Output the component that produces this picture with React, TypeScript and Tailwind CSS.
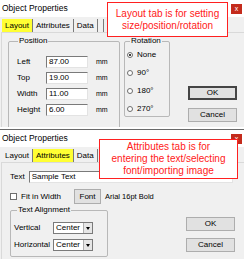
import { ReactNode } from 'react';

const ui = { fontFamily: '"Liberation Sans", Arial, sans-serif' };

function Tabs({ active }: { active: string }) {
  const tabs = ['Layout', 'Attributes', 'Data'];
  return (
    <div className="flex items-end h-[15px] pl-[2px] text-[8px] text-black">
      {tabs.map((t) => (
        <div
          key={t}
          className={`h-[13px] px-[3px] flex items-center border-r border-[#7a7a7a] ${
            t === active ? 'bg-[#ffff33]' : ''
          }`}
        >
          {t}
        </div>
      ))}
      <div className="w-[6px] h-[13px] border-r border-[#7a7a7a]" />
    </div>
  );
}

function TitleBar() {
  return (
    <div className="h-[17px] bg-white flex items-center justify-between pl-[2px] pr-[2px]">
      <span className="text-[8.5px] text-black">Object Properties</span>
      <div className="w-[11px] h-[10px] bg-[#c42b1c] text-white text-[7px] leading-[10px] text-center">
        x
      </div>
    </div>
  );
}

function Group({ label, className, children }: { label: string; className: string; children: ReactNode }) {
  return (
    <fieldset className={`border border-[#b8b8b8] rounded-[2px] px-[3px] ${className}`}>
      <legend className="px-[1px] ml-[3px] text-[8px] leading-[8px]">{label}</legend>
      {children}
    </fieldset>
  );
}

function Btn({ label, isDefault }: { label: string; isDefault?: boolean }) {
  return (
    <div
      className={`w-[49px] h-[14px] bg-[#e1e1e1] flex items-center justify-center text-[8px] ${
        isDefault ? 'border-2 border-[#454545]' : 'border border-[#adadad]'
      }`}
    >
      {label}
    </div>
  );
}

function Field({ value, w }: { value: string; w: string }) {
  return (
    <div className={`${w} h-[12px] bg-white border border-[#7a7a7a] border-b-[#e3e3e3] border-r-[#e3e3e3] pl-[2px] text-[8px] leading-[10px]`}>
      {value}
    </div>
  );
}

function Radio({ checked }: { checked?: boolean }) {
  return (
    <div className="w-[6px] h-[6px] rounded-full border border-[#6d6d6d] bg-white flex items-center justify-center">
      {checked && <div className="w-[2px] h-[2px] rounded-full bg-black" />}
    </div>
  );
}

function Combo({ value }: { value: string }) {
  return (
    <div className="w-[40px] h-[12px] bg-white border border-[#7a7a7a] flex items-center justify-between pl-[2px] text-[8px]">
      <span>{value}</span>
      <div className="w-[9px] h-[10px] bg-[#e6e6e6] border-l border-[#b0b0b0] flex items-center justify-center">
        <div className="w-0 h-0 border-l-[2.5px] border-r-[2.5px] border-t-[3px] border-l-transparent border-r-transparent border-t-black" />
      </div>
    </div>
  );
}

function Note({ lines, className }: { lines: string[]; className: string }) {
  return (
    <div
      className={`absolute bg-white border-[1.5px] border-[#ff2020] flex flex-col items-center justify-center text-[10px] leading-[12px] text-[#ff2020] ${className}`}
    >
      {lines.map((l) => (
        <span key={l}>{l}</span>
      ))}
    </div>
  );
}

function LayoutDialog() {
  const rows = [
    ['Left', '87.00'],
    ['Top', '19.00'],
    ['Width', '11.00'],
    ['Height', '6.00'],
  ];
  return (
    <div className="relative h-[127px] bg-[#f0f0f0] overflow-hidden">
      <TitleBar />
      <Tabs active="Layout" />
      <div className="border-t border-l border-[#d9d9d9] ml-[1px] h-[95px] flex items-start pl-[6px] pt-[4px] gap-[4px]">
        <Group label="Position" className="w-[112px] h-[92px] pt-[11px] pl-[6px]">
          <div className="flex flex-col gap-[4px]">
            {rows.map(([l, v]) => (
              <div key={l} className="flex items-center text-[8px]">
                <span className="w-[31px] pl-[2px]">{l}</span>
                <Field value={v} w="w-[42px]" />
                <span className="ml-[8px] text-[7px]">mm</span>
              </div>
            ))}
          </div>
        </Group>
        <Group label="Rotation" className="w-[46px] h-[80px] pt-[5px] pl-[2px]">
          <div className="flex flex-col gap-[9px] text-[8px]">
            {['None', '90°', '180°', '270°'].map((r, i) => (
              <div key={r} className="flex items-center gap-[4px] h-[9px]">
                <Radio checked={i === 0} />
                <span>{r}</span>
              </div>
            ))}
          </div>
        </Group>
        <div className="flex flex-col items-center gap-[8px] pt-[49px] pl-[14px]">
          <Btn label="OK" isDefault />
          <Btn label="Cancel" />
        </div>
      </div>
      <Note lines={['Layout tab is for setting', 'size/position/rotation']} className="left-[107px] top-[2px] w-[121px] h-[35px]" />
    </div>
  );
}

function AttributesDialog() {
  return (
    <div className="relative h-[130px] bg-[#f0f0f0] overflow-hidden border-t border-[#6a6a6a]">
      <TitleBar />
      <Tabs active="Attributes" />
      <div className="border-t border-l border-[#d9d9d9] ml-[1px] h-[100px] pl-[8px] pt-[8px] text-[8px]">
        <div className="flex items-center gap-[4px]">
          <span>Text</span>
          <Field value="Sample Text" w="w-[204px]" />
        </div>
        <div className="flex items-center mt-[6px]">
          <div className="w-[7px] h-[7px] bg-white border border-[#6d6d6d]" />
          <span className="ml-[4px]">Fit in Width</span>
          <div className="ml-[13px] w-[27px] h-[15px] bg-[#e1e1e1] border border-[#adadad] flex items-center justify-center">
            Font
          </div>
          <span className="ml-[4px] text-[7.5px]">Arial 16pt Bold</span>
        </div>
        <div className="flex mt-[2px]">
          <Group label="Text Alignment" className="w-[98px] h-[51px] pt-[8px] pl-[3px]">
            <div className="flex flex-col gap-[5px]">
              <div className="flex items-center">
                <span className="w-[39px]">Vertical</span>
                <Combo value="Center" />
              </div>
              <div className="flex items-center">
                <span className="w-[39px]">Horizontal</span>
                <Combo value="Center" />
              </div>
            </div>
          </Group>
          <div className="flex flex-col items-center gap-[7px] pt-[11px] ml-[78px]">
            <Btn label="OK" />
            <Btn label="Cancel" />
          </div>
        </div>
      </div>
      <Note
        lines={['Attributes tab is for', 'entering the text/selecting', 'font/importing image']}
        className="left-[99px] top-[9px] w-[139px] h-[40px]"
      />
    </div>
  );
}

export default function App() {
  return (
    <div className="w-[244px] h-[259px] bg-white overflow-hidden text-black" style={ui}>
      <LayoutDialog />
      <div className="h-[2px] bg-white" />
      <AttributesDialog />
    </div>
  );
}
